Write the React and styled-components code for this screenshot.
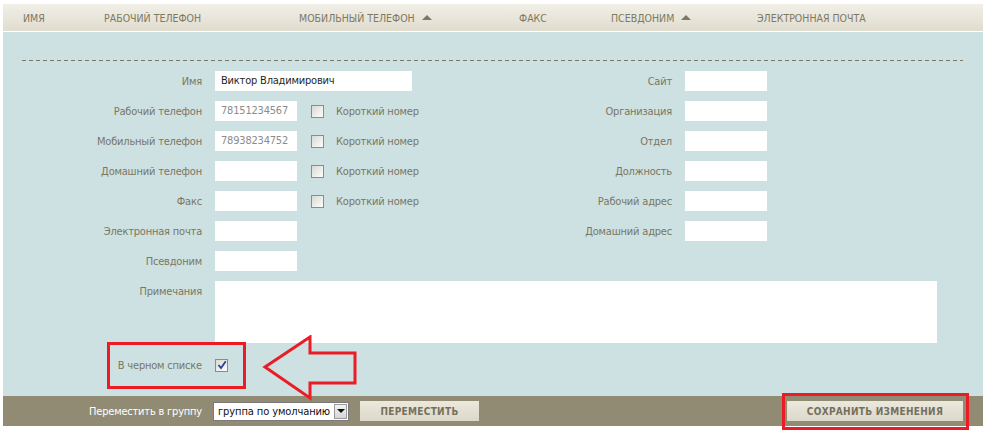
import React from "react";
import styled, { createGlobalStyle } from "styled-components";

const FONT = `"DejaVu Sans Condensed", "DejaVu Sans", Tahoma, sans-serif`;

const Global = createGlobalStyle`
  html, body { margin: 0; padding: 0; background: #fff; }
  body { font-family: ${FONT}; font-size: 11px; letter-spacing: -0.2px; }
  * { box-sizing: border-box; }
`;

const Page = styled.div`
  position: relative;
  width: 990px;
  height: 434px;
  padding: 4px 7px 0 3px;
`;

const HeaderBar = styled.div`
  display: grid;
  grid-template-columns: 81px 195px 220px 92px 146px 1fr;
  align-items: center;
  height: 28px;
  padding-left: 20px;
  background: linear-gradient(#f1efe7, #e0dcce);
  border-bottom: 1px solid #fff;
  color: #7d7862;
  font-size: 10.5px;
  letter-spacing: 0;
  text-transform: uppercase;
  white-space: nowrap;
`;

const HeaderCell = styled.div`
  display: flex;
  align-items: center;
  gap: 7px;
`;

const SortUp = styled.span`
  width: 0;
  height: 0;
  border-left: 5px solid transparent;
  border-right: 5px solid transparent;
  border-bottom: 5px solid #7d7862;
  margin-top: -1px;
`;

const Panel = styled.div`
  background: #cde1e2;
  padding: 28px 0 0 0;
  height: 364px;
`;

const Divider = styled.div`
  height: 1px;
  margin: 0 20px 10px 19px;
  background-image: linear-gradient(to right, #7d7862 4px, transparent 4px);
  background-size: 7px 1px;
`;

const Columns = styled.div`
  display: flex;
`;

const Column = styled.div`
  display: flex;
  flex-direction: column;
  gap: 10px;
  width: ${(p) => p.$w}px;
`;

const Row = styled.div`
  display: flex;
  align-items: ${(p) => (p.$top ? "flex-start" : "center")};
  height: ${(p) => p.$h || 20}px;
  margin-top: ${(p) => p.$mt || 0}px;
`;

const Label = styled.label`
  width: ${(p) => p.$w}px;
  flex: none;
  text-align: right;
  color: ${(p) => (p.$light ? "#ffffff" : "#7b7662")};
  margin-right: ${(p) => p.$mr ?? 13}px;
  white-space: nowrap;
  padding-top: ${(p) => (p.$top ? "4px" : "0")};
`;

const TextInput = styled.div`
  width: ${(p) => p.$w}px;
  height: 20px;
  background: #fff;
  color: ${(p) => (p.$muted ? "#8c8c8c" : "#1f1f1f")};
  padding: 0 6px;
  line-height: 20px;
  white-space: nowrap;
  overflow: hidden;
`;

const NotesArea = styled.div`
  width: 722px;
  height: 62px;
  background: #fff;
`;

const Box = styled.span`
  display: inline-flex;
  align-items: center;
  justify-content: center;
  width: 13px;
  height: 13px;
  border: 1px solid #8b8b8b;
  background: linear-gradient(135deg, #d9d9d3, #fdfdfb);
  flex: none;
  margin-left: ${(p) => p.$ml || 0}px;
`;

const CheckCaption = styled.span`
  color: #7b7662;
  margin-left: 12px;
  white-space: nowrap;
`;

const BlacklistRow = styled.div`
  display: flex;
  align-items: center;
  height: 20px;
  margin-top: 12px;
`;

const Footer = styled.div`
  display: flex;
  align-items: center;
  height: 30px;
  background: #918b74;
`;

const Select = styled.div`
  display: flex;
  align-items: center;
  justify-content: space-between;
  width: 136px;
  height: 19px;
  background: #fff;
  border: 1px solid #7a7a7a;
  padding: 0 1px 0 4px;
  color: #111;
  white-space: nowrap;
  font-size: 11px;
  letter-spacing: -0.1px;
`;

const SelectArrow = styled.span`
  display: flex;
  align-items: center;
  justify-content: center;
  width: 13px;
  height: 15px;
  border: 1px solid #9a9a9a;
  background: linear-gradient(#f3f3f3, #d6d6d6);
  &::after {
    content: "";
    border-left: 4px solid transparent;
    border-right: 4px solid transparent;
    border-top: 4px solid #111;
  }
`;

const ActionButton = styled.button`
  height: 20px;
  width: ${(p) => p.$w}px;
  margin-left: ${(p) => p.$ml || 0}px;
  margin-right: ${(p) => p.$mr || 0}px;
  border: none;
  background: linear-gradient(#ebe8dd, #dcd8ca);
  color: #75705c;
  font-family: ${FONT};
  font-weight: bold;
  font-size: 10px;
  letter-spacing: 0.3px;
  text-transform: uppercase;
  padding: 0;
`;

const Spacer = styled.div`
  flex: 1;
`;

const Highlight = styled.div`
  position: absolute;
  border: 3px solid #ec1c24;
  pointer-events: none;
`;

const ArrowMark = styled.svg`
  position: absolute;
  left: 262px;
  top: 335px;
  pointer-events: none;
`;

function CheckBox({ checked, ml }) {
  return (
    <Box $ml={ml}>
      {checked && (
        <svg width="10" height="10" viewBox="0 0 10 10">
          <path d="M1.5 5 L4 8 L8.8 1.2" fill="none" stroke="#2a3f9a" strokeWidth="1.8" />
        </svg>
      )}
    </Box>
  );
}

const leftRows = [
  { label: "Имя", value: "Виктор Владимирович", w: 197 },
  { label: "Рабочий телефон", value: "78151234567", w: 82, muted: true, short: true },
  { label: "Мобильный телефон", value: "78938234752", w: 82, muted: true, short: true },
  { label: "Домашний телефон", value: "", w: 82, short: true },
  { label: "Факс", value: "", w: 82, short: true },
  { label: "Электронная почта", value: "", w: 82 },
  { label: "Псевдоним", value: "", w: 82 },
];

const rightRows = ["Сайт", "Организация", "Отдел", "Должность", "Рабочий адрес", "Домашний адрес"];

export default function App() {
  return (
    <>
      <Global />
      <Page>
        <HeaderBar>
          <HeaderCell>Имя</HeaderCell>
          <HeaderCell>Рабочий телефон</HeaderCell>
          <HeaderCell>
            Мобильный телефон <SortUp />
          </HeaderCell>
          <HeaderCell>Факс</HeaderCell>
          <HeaderCell>
            Псевдоним <SortUp />
          </HeaderCell>
          <HeaderCell>Электронная почта</HeaderCell>
        </HeaderBar>
        <Panel>
          <Divider />
          <Columns>
            <Column $w={450}>
              {leftRows.map((r) => (
                <Row key={r.label}>
                  <Label $w={199}>{r.label}</Label>
                  <TextInput $w={r.w} $muted={r.muted}>
                    {r.value}
                  </TextInput>
                  {r.short && (
                    <>
                      <CheckBox ml={14} />
                      <CheckCaption>Короткий номер</CheckCaption>
                    </>
                  )}
                </Row>
              ))}
            </Column>
            <Column $w={530}>
              {rightRows.map((l) => (
                <Row key={l}>
                  <Label $w={219}>{l}</Label>
                  <TextInput $w={82} />
                </Row>
              ))}
            </Column>
          </Columns>
          <Row $h={62} $top $mt={10}>
            <Label $w={199} $top>
              Примечания
            </Label>
            <NotesArea />
          </Row>
          <BlacklistRow>
            <Label $w={199}>В черном списке</Label>
            <CheckBox checked />
          </BlacklistRow>
        </Panel>
        <Footer>
          <Label $w={199} $mr={11} $light>
            Переместить в группу
          </Label>
          <Select>
            группа по умолчанию
            <SelectArrow />
          </Select>
          <ActionButton $w={119} $ml={11}>
            Переместить
          </ActionButton>
          <Spacer />
          <ActionButton $w={176} $mr={20}>
            Сохранить изменения
          </ActionButton>
        </Footer>
        <Highlight style={{ left: 107, top: 342, width: 139, height: 47 }} />
        <Highlight style={{ left: 782, top: 393, width: 187, height: 37 }} />
        <ArrowMark width="96" height="66" viewBox="0 0 96 66">
          <path
            d="M3 32 L48 2 L48 18 L93 18 L93 48 L48 48 L48 63 Z"
            fill="none"
            stroke="#ec1c24"
            strokeWidth="3"
            strokeLinejoin="miter"
          />
        </ArrowMark>
      </Page>
    </>
  );
}
